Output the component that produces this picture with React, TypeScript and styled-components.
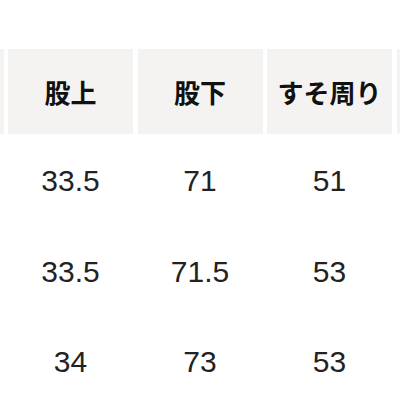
import styled, { createGlobalStyle } from "styled-components";

const GlobalStyle = createGlobalStyle`
  html, body {
    margin: 0;
    padding: 0;
    background: #ffffff;
  }
  body {
    font-family: "Noto Sans CJK JP", "Noto Sans", sans-serif;
    color: #1a1a1a;
  }
`;

const Frame = styled.div`
  width: 400px;
  height: 400px;
  overflow: hidden;
  padding-top: 49px;
  box-sizing: border-box;
`;

const Table = styled.div`
  display: flex;
  flex-direction: column;
  margin-left: -121.5px;
`;

const Row = styled.div<{ $head?: boolean }>`
  display: flex;
  gap: 4.5px;
  height: ${(p) => (p.$head ? "85px" : "90.5px")};
  margin-bottom: ${(p) => (p.$head ? "2px" : "0")};
`;

const HeadCell = styled.div`
  flex: 0 0 125px;
  display: flex;
  align-items: center;
  justify-content: center;
  background: #f5f3f2;
  font-size: 26px;
  font-weight: 700;
  color: #111111;
  white-space: nowrap;
`;

const Cell = styled.div`
  flex: 0 0 125px;
  display: flex;
  align-items: center;
  justify-content: center;
  font-family: "Liberation Sans", Arial, sans-serif;
  font-size: 30px;
  font-weight: 400;
  color: #222222;
  white-space: nowrap;
`;

const headers = ["", "股上", "股下", "すそ周り", ""];

const rows = [
  ["", "33.5", "71", "51", ""],
  ["", "33.5", "71.5", "53", ""],
  ["", "34", "73", "53", ""],
];

export default function App() {
  return (
    <>
      <GlobalStyle />
      <Frame>
        <Table>
          <Row $head>
            {headers.map((h, i) => (
              <HeadCell key={i}>{h}</HeadCell>
            ))}
          </Row>
          {rows.map((r, i) => (
            <Row key={i}>
              {r.map((v, j) => (
                <Cell key={j}>{v}</Cell>
              ))}
            </Row>
          ))}
        </Table>
      </Frame>
    </>
  );
}
